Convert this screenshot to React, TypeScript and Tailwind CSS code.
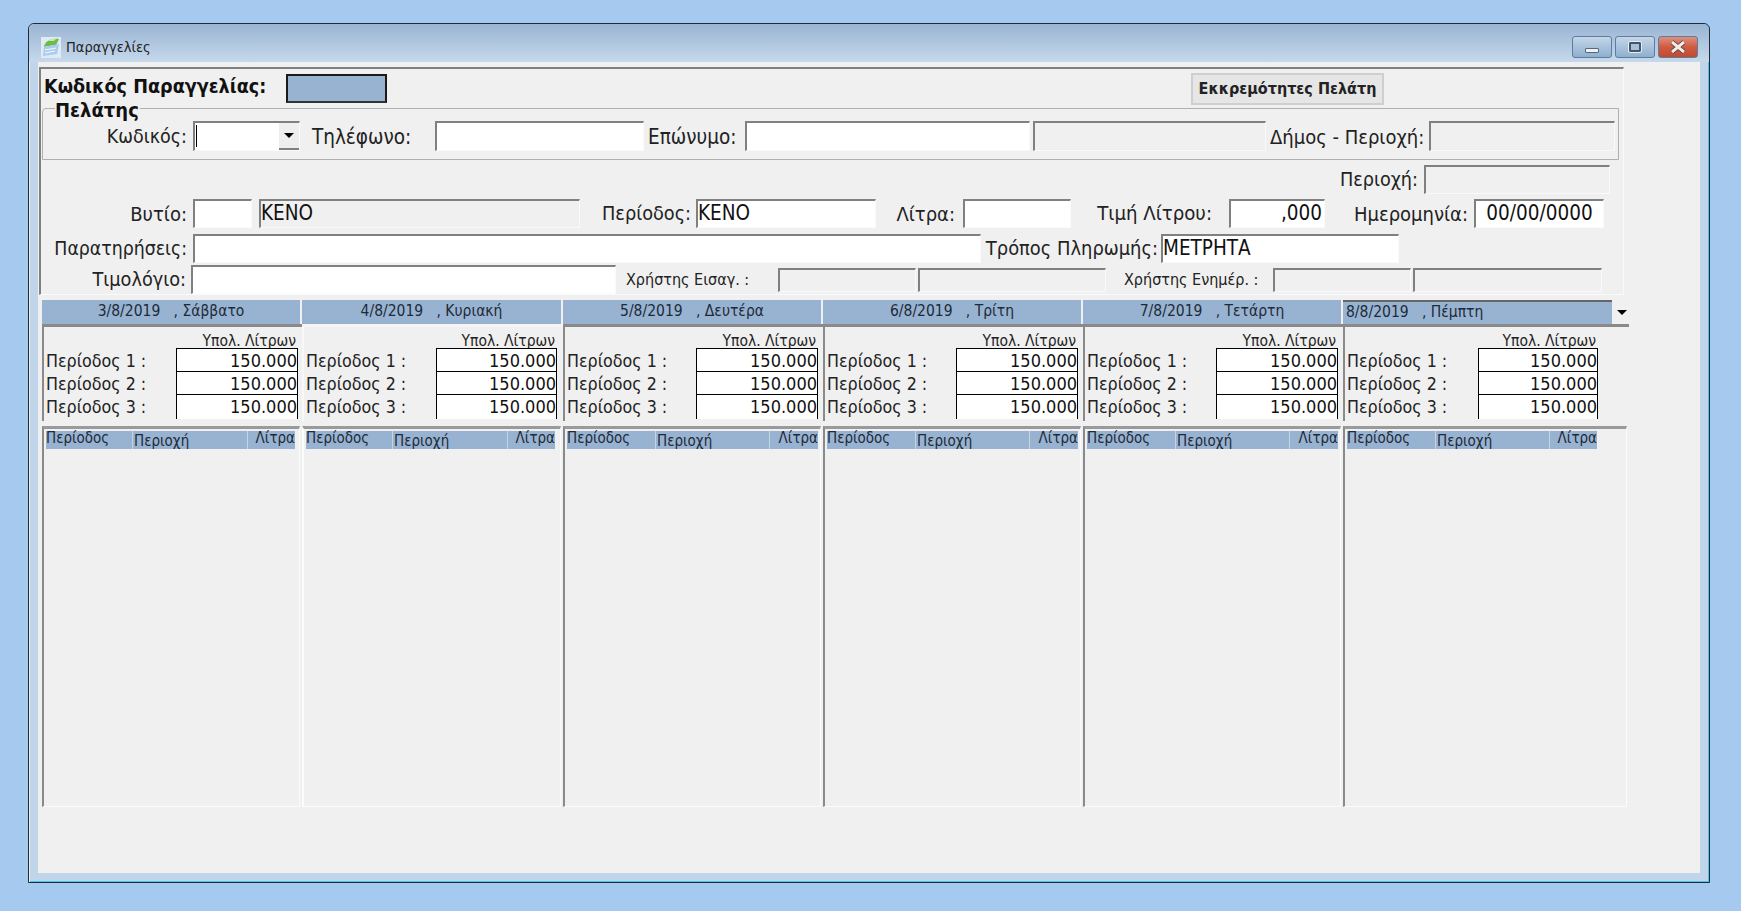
import React from "react";

const FONT = "font-['DejaVu_Sans_Condensed','Noto_Sans',sans-serif]";

const Field = ({ className = "", gray = false, children }: { className?: string; gray?: boolean; children?: React.ReactNode }) => (
    <div
        className={`flex items-center shrink-0 overflow-hidden whitespace-nowrap border-t-2 border-l-2 border-t-[#808080] border-l-[#808080] border-r border-b border-r-[#fafafa] border-b-[#fafafa] pb-[2px] text-[20.5px] leading-none text-[#111] ${gray ? "bg-[#f0f0f0]" : "bg-white"} ${className}`}
    >
        {children}
    </div>
);

const Label = ({ className = "", children }: { className?: string; children: React.ReactNode }) => (
    <div className={`shrink-0 whitespace-nowrap leading-none text-[#222] ${className}`}>{children}</div>
);

type DayProps = {
    title: string;
    width: string;
    dark?: boolean;
    gridClass: string;
    colA: string;
    colB: string;
    colC: string;
    last?: boolean;
};

const PERIODS = ["Περίοδος 1 :", "Περίοδος 2 :", "Περίοδος 3 :"];

const DayColumn = ({ title, width, dark, gridClass, colA, colB, colC, last }: DayProps) => (
    <div className={`flex flex-col shrink-0 ${width}`}>
        <div className={`relative h-[28px] border-b-[3px] ${dark ? "border-b-[#8a8a8a]" : "border-b-[#f4f4f4]"}`}>
            <div
                className={`h-[24px] mt-[1px] bg-[#98b3d1] flex items-center whitespace-pre text-[15.5px] leading-none text-[#1d2a38] ${last ? "border-t-2 border-t-[#666] w-[269px] justify-start pl-[3px]" : "mr-[2px] justify-center"}`}
            >
                {title}
            </div>
            {last && (
                <div className="absolute right-[2px] top-[11px] w-0 h-0 border-l-[5px] border-r-[5px] border-t-[5px] border-l-transparent border-r-transparent border-t-black" />
            )}
        </div>
        <div className={`h-[94px] flex border-l-2 mr-[2px] pl-[2px] ${dark ? "border-l-[#8a8a8a]" : "border-l-[#f8f8f8]"}`}>
            <div className="flex flex-col pt-[23px] w-[128px] shrink-0">
                {PERIODS.map((p) => (
                    <div key={p} className="h-[23px] flex items-center text-[17.7px] leading-none text-[#222] whitespace-nowrap">
                        {p}
                    </div>
                ))}
            </div>
            <div className={`flex flex-col shrink-0 ${gridClass}`}>
                <div className="h-[21px] text-right pr-[2px] text-[15.5px] leading-[29px] text-[#222] overflow-hidden whitespace-nowrap">Υπολ. Λίτρων</div>
                <div className="h-[71px] bg-white border-x border-t border-black">
                    {[0, 1, 2].map((i) => (
                        <div
                            key={i}
                            className={`h-[23px] text-right text-[18px] leading-[23px] text-[#111] ${i < 2 ? "border-b border-black" : ""}`}
                        >
                            150.000
                        </div>
                    ))}
                </div>
            </div>
        </div>
        <div className={`h-[381px] mt-[5px] mr-[2px] border-t-[3px] border-t-[#9a9a9a] border-l-2 border-r border-b border-r-[#fbfbfb] border-b-[#fbfbfb] ${dark ? "border-l-[#8a8a8a]" : "border-l-[#fbfbfb]"}`}>
            <div className="mt-[2px] ml-[2px] h-[18px] w-fit flex items-center bg-[#98b3d1] text-[15px] leading-none text-[#1d2a38]">
                <div className={`shrink-0 h-full border-r border-r-[#c5d4e4] ${colA}`}>Περίοδος</div>
                <div className={`shrink-0 h-full border-r border-r-[#c5d4e4] pt-[3px] pl-[1px] ${colB}`}>Περιοχή</div>
                <div className={`shrink-0 h-full text-right ${colC}`}>Λίτρα</div>
            </div>
        </div>
    </div>
);

const WindowButton = ({ className = "", children }: { className?: string; children: React.ReactNode }) => (
    <div className={`w-[40px] h-[22px] rounded-[3px] border border-[#5f7c9c] flex items-center justify-center ${className}`}>{children}</div>
);

export default function App() {
    return (
        <div className={`w-full h-[911px] bg-[#a6c9ef] pt-[23px] pl-[28px] overflow-hidden ${FONT}`}>
            <div className="w-[1682px] h-[860px] flex flex-col rounded-t-[6px] border border-[#1e2c38] bg-[#c0d4ea] shadow-[inset_1px_0_0_#e6eef6,inset_-1px_0_0_#4cc6ee,inset_0_-1px_0_#4cc6ee]">
                {/* title bar */}
                <div className="h-[38px] shrink-0 flex items-center pt-[8px] pl-[12px] pr-[11px] bg-gradient-to-b from-[#9ab4d2] to-[#c6d9ec] rounded-t-[6px]">
                    <svg width="20" height="21" viewBox="0 0 20 21" className="shrink-0">
                        <rect x="0" y="0" width="20" height="21" fill="#dfeaf6" />
                        <path d="M3 10 C4 4 10 1 18 2 L15 8 C11 8 7 9 3 10 Z" fill="#6dbb4a" />
                        <path d="M7 4 C9 2 13 1 15 2 L13 4 Z" fill="#c5e6a8" />
                        <path d="M3 10 L18 7 L16 17 L2 19 Z" fill="#a9cbed" />
                        <path d="M4 13 L15 11 M4 16 L14 14" stroke="#f4f8fc" strokeWidth="1.2" />
                    </svg>
                    <span className="ml-[5px] text-[14.5px] leading-none text-[#222]">Παραγγελίες</span>
                    <div className="ml-auto flex gap-[3px]">
                        <WindowButton className="bg-gradient-to-b from-[#c4d6e9] to-[#8fafcf]">
                            <div className="w-[14px] h-[5px] mt-[6px] bg-[#eef2f6] border border-[#55677a] rounded-[1px]" />
                        </WindowButton>
                        <WindowButton className="bg-gradient-to-b from-[#c4d6e9] to-[#8fafcf]">
                            <div className="w-[12px] h-[10px] border-2 border-[#44566a] bg-[#a9c0d8] rounded-[1px] outline outline-[#e4edf6]" />
                        </WindowButton>
                        <WindowButton className="border-[#5a3a36] bg-gradient-to-b from-[#dd8f7e] via-[#cf5b42] to-[#c04a30]">
                            <svg width="18" height="14" viewBox="0 0 18 14">
                                <path d="M3 2 L15 12 M15 2 L3 12" stroke="#4a3330" strokeWidth="4.5" />
                                <path d="M3 2 L15 12 M15 2 L3 12" stroke="#f1ece8" strokeWidth="3" />
                            </svg>
                        </WindowButton>
                    </div>
                </div>

                {/* client area */}
                <div className="w-[1662px] h-[811px] ml-[9px] bg-[#f0f0f0] shrink-0 pt-[5px]">
                    <div className="ml-[1px] w-[1585px] h-[228px] border-t-2 border-l-2 border-t-[#808080] border-l-[#808080] border-r border-b border-r-[#fafafa] border-b-[#fafafa]">
                        <div className="flex items-start h-[32px] mt-[4px] pl-[3px]">
                            <div className="w-[242px] shrink-0 mt-[4px] text-[19.6px] leading-none font-bold text-[#111] whitespace-nowrap">Κωδικός Παραγγελίας:</div>
                            <div className="w-[101px] h-[29px] mt-[1px] bg-[#98b3d1] border-2 border-[#1a1a1a] border-b-[#333] shrink-0" />
                            <div className="w-[804px] shrink-0" />
                            <div className="w-[193px] h-[32px] shrink-0 flex items-center justify-center bg-[#e6e6e6] border-2 border-[#cfcfcf] text-[16px] font-bold text-[#222] whitespace-nowrap">
                                Εκκρεμότητες Πελάτη
                            </div>
                        </div>

                        {/* customer group */}
                        <div className="relative ml-[1px] mt-[3px] w-[1577px] h-[52px] border border-[#b0b0b0] rounded-tl-[4px] flex pt-[12px]">
                            <div className="absolute left-[12px] -top-[9px] bg-[#f0f0f0] pr-[1px] text-[20px] leading-[20px] font-bold text-[#111]">Πελάτης</div>
                            <Label className="w-[150px] text-right pr-[6px] pt-[6px] text-[19.5px]">Κωδικός:</Label>
                            <Field className="w-[107px] h-[30px] relative">
                                <div className="w-[1px] h-[22px] bg-black ml-[1px]" />
                                <div className="absolute right-0 top-0 bottom-0 w-[20px] bg-[#eeeeee] border-b-2 border-b-[#808080] flex items-center justify-center">
                                    <div className="w-0 h-0 border-l-[5px] border-r-[5px] border-t-[5px] border-l-transparent border-r-transparent border-t-black" />
                                </div>
                            </Field>
                            <Label className="w-[135px] pl-[12px] pt-[6px] text-[20.5px]">Τηλέφωνο:</Label>
                            <Field className="w-[209px] h-[30px]" />
                            <Label className="w-[101px] pl-[4px] pt-[6px] text-[20.5px]">Επώνυμο:</Label>
                            <Field className="w-[285px] h-[30px]" />
                            <Field gray className="w-[233px] h-[30px] ml-[3px]" />
                            <Label className="w-[163px] pl-[4px] pt-[6px] text-[20px]">Δήμος - Περιοχή:</Label>
                            <Field gray className="w-[186px] h-[30px]" />
                        </div>

                        <div className="flex items-center h-[29px] mt-[5px]">
                            <Label className="w-[1383px] text-right pr-[6px] text-[19.6px]">Περιοχή:</Label>
                            <Field gray className="w-[186px] h-[29px]" />
                        </div>

                        <div className="flex items-center h-[29px] mt-[5px]">
                            <Label className="w-[152px] text-right pr-[6px] text-[20px]">Βυτίο:</Label>
                            <Field className="w-[59px] h-[29px]" />
                            <Field gray className="w-[321px] h-[29px] ml-[7px]">ΚΕΝΟ</Field>
                            <Label className="w-[116px] text-right pr-[5px] text-[19.7px]">Περίοδος:</Label>
                            <Field className="w-[180px] h-[29px]">ΚΕΝΟ</Field>
                            <Label className="w-[87px] text-right pr-[8px] text-[20px]">Λίτρα:</Label>
                            <Field className="w-[108px] h-[29px]" />
                            <Label className="w-[158px] text-right pr-[17px] text-[20.2px]">Τιμή Λίτρου:</Label>
                            <Field className="w-[96px] h-[29px] justify-end pr-[2px]">,000</Field>
                            <Label className="w-[149px] text-right pr-[6px] text-[20px]">Ημερομηνία:</Label>
                            <Field className="w-[130px] h-[29px] justify-center">00/00/0000</Field>
                        </div>

                        <div className="flex items-center h-[29px] mt-[6px]">
                            <Label className="w-[152px] text-right pr-[6px] text-[19.3px]">Παρατηρήσεις:</Label>
                            <Field className="w-[788px] h-[29px]" />
                            <Label className="w-[180px] text-right pr-[3px] text-[19.9px]">Τρόπος Πληρωμής:</Label>
                            <Field className="w-[238px] h-[29px]">ΜΕΤΡΗΤΑ</Field>
                        </div>

                        <div className="flex items-center h-[29px] mt-[2px]">
                            <Label className="w-[150px] text-right pr-[5px] text-[19.7px]">Τιμολόγιο:</Label>
                            <Field className="w-[425px] h-[29px]" />
                            <Label className="w-[162px] pl-[10px] text-[16px]">Χρήστης Εισαγ. :</Label>
                            <Field gray className="w-[138px] h-[24px]" />
                            <Field gray className="w-[188px] h-[24px] ml-[2px]" />
                            <Label className="w-[167px] pl-[18px] text-[16px]">Χρήστης Ενημέρ. :</Label>
                            <Field gray className="w-[138px] h-[24px]" />
                            <Field gray className="w-[189px] h-[24px] ml-[2px]" />
                        </div>
                    </div>

                    {/* day columns */}
                    <div className="flex ml-[4px] mt-[4px]">
                        <DayColumn title="3/8/2019   , Σάββατο" width="w-[260px]" dark gridClass="w-[122px] ml-[2px]" colA="w-[87px]" colB="w-[115px]" colC="w-[47px]" />
                        <DayColumn title="4/8/2019   , Κυριακή" width="w-[261px]" gridClass="w-[121px] ml-[2px]" colA="w-[87px]" colB="w-[115px]" colC="w-[47px]" />
                        <DayColumn title="5/8/2019   , Δευτέρα" width="w-[260px]" dark gridClass="w-[122px] ml-[1px]" colA="w-[89px]" colB="w-[114px]" colC="w-[48px]" />
                        <DayColumn title="6/8/2019   , Τρίτη" width="w-[260px]" dark gridClass="w-[122px] ml-[1px]" colA="w-[89px]" colB="w-[114px]" colC="w-[48px]" />
                        <DayColumn title="7/8/2019   , Τετάρτη" width="w-[260px]" dark gridClass="w-[122px] ml-[1px]" colA="w-[89px]" colB="w-[114px]" colC="w-[48px]" />
                        <DayColumn title="8/8/2019   , Πέμπτη" width="w-[286px]" dark last gridClass="w-[120px] ml-[3px]" colA="w-[89px]" colB="w-[114px]" colC="w-[47px]" />
                    </div>
                </div>
            </div>
        </div>
    );
}
